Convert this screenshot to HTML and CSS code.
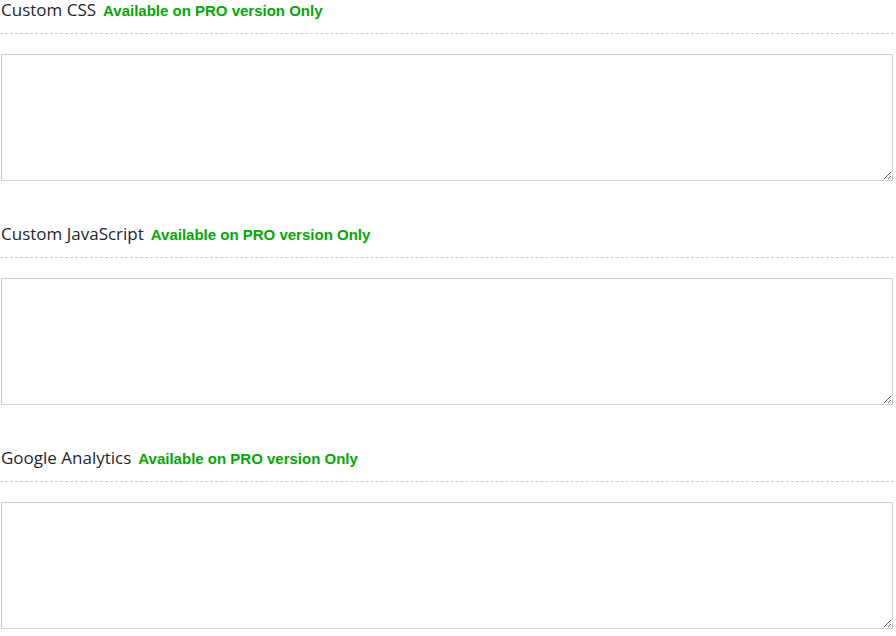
FILE: index.html
```html
<!DOCTYPE html>
<html>
<head>
<meta charset="utf-8">
<link rel="stylesheet" href="styles.css">
</head>
<body>
<div class="settings">
  <section class="field">
    <h3 class="field-title"><span class="label">Custom CSS</span><span class="pro">Available on PRO version Only</span></h3>
    <textarea class="code"></textarea>
  </section>
  <section class="field">
    <h3 class="field-title"><span class="label">Custom JavaScript</span><span class="pro">Available on PRO version Only</span></h3>
    <textarea class="code"></textarea>
  </section>
  <section class="field">
    <h3 class="field-title"><span class="label">Google Analytics</span><span class="pro">Available on PRO version Only</span></h3>
    <textarea class="code"></textarea>
  </section>
</div>
</body>
</html>
```
FILE: styles.css
```css
html, body {
  margin: 0;
  padding: 0;
  background: #fff;
}
.settings {
  width: 894px;
  display: flex;
  flex-direction: column;
  gap: 43px;
}
.field {
  display: flex;
  flex-direction: column;
}
.field-title {
  margin: 0;
  height: 20px;
  padding: 0 0 13px 1px;
  border-bottom: 1px dashed #cccccc;
  display: flex;
  align-items: baseline;
  gap: 7px;
  font-weight: 400;
}
.label {
  font-family: "Open Sans", sans-serif;
  font-size: 17px;
  line-height: 24px;
  margin-top: -2px;
  color: #23282d;
}
.pro {
  font-family: "Liberation Sans", Arial, sans-serif;
  font-weight: 700;
  font-size: 15px;
  line-height: 20px;
  color: #00aa00;
}
.code {
  display: block;
  box-sizing: border-box;
  margin: 20px 0 0 1px;
  width: 892px;
  height: 127px;
  border: 1px solid #cfcfcf;
  background: #fff;
  padding: 4px;
  font-family: "Liberation Mono", monospace;
  font-size: 13px;
  resize: both;
  outline: none;
}
```
